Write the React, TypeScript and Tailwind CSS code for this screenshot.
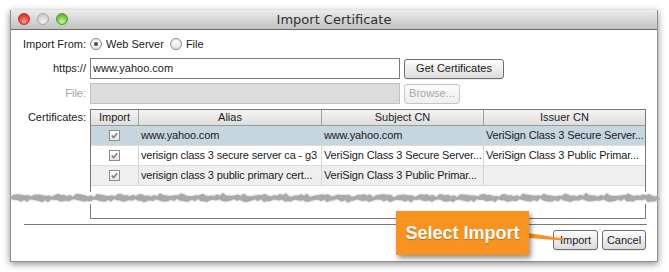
import React from "react";

const font = { fontFamily: '"Liberation Sans", Arial, sans-serif' };

function Radio({ checked }: { checked: boolean }) {
  return (
    <span className="flex h-[12px] w-[12px] items-center justify-center rounded-full border border-[#8a8a8a] bg-[linear-gradient(#ffffff,#e2e2e2)] shadow-[inset_0_1px_1px_rgba(0,0,0,0.12)]">
      {checked && <span className="h-[4px] w-[4px] rounded-full bg-[#4a4a4a]" />}
    </span>
  );
}

function Check() {
  return (
    <span className="flex h-[11px] w-[11px] items-center justify-center border border-[#8c8c8c] bg-[linear-gradient(#ffffff,#e6e6e6)]">
      <svg width="9" height="9" viewBox="0 0 9 9">
        <path d="M1.8 4.6 L3.6 6.6 L7.2 2.2" fill="none" stroke="#7a7a7a" strokeWidth="1.5" />
      </svg>
    </span>
  );
}

function Button({ children, disabled, className }: { children: React.ReactNode; disabled?: boolean; className?: string }) {
  return (
    <div
      className={
        "flex h-[20px] items-center justify-center rounded-[3px] border text-[11px] leading-none " +
        (disabled
          ? "border-[#c4c4c4] bg-[linear-gradient(#fbfbfb,#efefef)] text-[#a6a6a6] "
          : "border-[#6f6f6f] bg-[linear-gradient(#fdfdfd,#dcdcdc)] text-[#1a1a1a] shadow-[0_1px_0_rgba(0,0,0,0.08)] ") +
        (className ?? "")
      }
    >
      {children}
    </div>
  );
}

function Tear() {
  const w = 650;
  const top: string[] = [];
  const bot: string[] = [];
  const noise = (x: number, s: number) =>
    Math.sin(x * 0.9 + s) * 0.7 + Math.sin(x * 0.31 + s * 2) * 0.8 + Math.sin(x * 2.7 + s) * 0.45 + ((((x * 7919 + s * 131) % 17) + 17) % 17) / 17 - 0.5;
  for (let x = 0; x <= w; x += 3) {
    top.push(`${x},${(4.2 + noise(x, 1) * 1.1).toFixed(2)}`);
  }
  for (let x = w; x >= 0; x -= 3) {
    bot.push(`${x},${(9.6 + noise(x, 5) * 1.1).toFixed(2)}`);
  }
  const pts = [...top, ...bot].join(" ");
  return (
    <svg width={w} height="14" viewBox={`0 0 ${w} 14`} className="block">
      <defs>
        <filter id="tb" x="-5%" y="-50%" width="110%" height="200%">
          <feGaussianBlur stdDeviation="1.1" />
        </filter>
        <filter id="tb2" x="-5%" y="-50%" width="110%" height="200%">
          <feGaussianBlur stdDeviation="0.45" />
        </filter>
      </defs>
      <polygon points={pts} fill="#bdbdbd" filter="url(#tb)" />
      <polygon points={pts} fill="#a9a9a9" filter="url(#tb2)" transform="translate(0,0.3) scale(1,0.97)" />
    </svg>
  );
}

const rows = [
  { alias: "www.yahoo.com", subject: "www.yahoo.com", issuer: "VeriSign Class 3 Secure Server...", bg: "bg-[#c5d6df]" },
  { alias: "verisign class 3 secure server ca - g3", subject: "VeriSign Class 3 Secure Server...", issuer: "VeriSign Class 3 Public Primar...", bg: "bg-white" },
  { alias: "verisign class 3 public primary cert...", subject: "VeriSign Class 3 Public Primar...", issuer: "", bg: "bg-[#efefef]" },
];

export default function App() {
  return (
    <div className="relative h-[272px] w-[669px] overflow-hidden bg-white pl-[10px] pt-[10px]" style={font}>
      <div className="flex h-[252px] w-[648px] flex-col border-x border-b border-[#8e8e8e] bg-white shadow-[0_2px_7px_rgba(0,0,0,0.45)]">
        {/* title bar */}
        <div className="relative flex h-[20px] shrink-0 items-center justify-center border-b border-[#6c6c6c] bg-[linear-gradient(#ececec,#d2d2d2_60%,#c3c3c3)]">
          <div className="absolute left-[7px] top-[3px] flex gap-[7px]">
            <span className="h-[12px] w-[12px] rounded-full border border-[#b5302a] bg-[radial-gradient(circle_at_50%_75%,#ff9a8c,#e8473c_55%,#c52a22)]" />
            <span className="h-[12px] w-[12px] rounded-full border border-[#a8a8a8] bg-[radial-gradient(circle_at_50%_75%,#f4f4f4,#d6d6d6_55%,#bdbdbd)]" />
            <span className="h-[12px] w-[12px] rounded-full border border-[#4f9a2e] bg-[radial-gradient(circle_at_50%_75%,#c6f5a4,#72cc45_55%,#4ea428)]" />
          </div>
          <span className="text-[13px] leading-none text-[#2e2e2e]" style={{ fontFamily: '"DejaVu Sans", sans-serif' }}>
            Import Certificate
          </span>
        </div>

        {/* top content */}
        <div className="flex h-[162px] shrink-0 flex-col pr-[11px] pt-[6px] text-[11px] leading-none text-[#1a1a1a]">
          <div className="grid grid-cols-[75px_1fr] gap-x-[4px]">
            <div className="flex h-[16px] items-center justify-end">Import From:</div>
            <div className="flex h-[16px] items-center">
              <Radio checked />
              <span className="ml-[4px]">Web Server</span>
              <span className="ml-[6px]">
                <Radio checked={false} />
              </span>
              <span className="ml-[4px]">File</span>
            </div>
          </div>

          <div className="mt-[6px] grid grid-cols-[75px_1fr] gap-x-[4px]">
            <div className="flex h-[21px] items-center justify-end">https://</div>
            <div className="flex h-[21px] items-center gap-[4px]">
              <div className="flex h-[21px] w-[310px] items-center border border-[#7c7c7c] bg-white pl-[2px]">www.yahoo.com</div>
              <Button className="w-[100px]">Get Certificates</Button>
            </div>
          </div>

          <div className="mt-[4px] grid grid-cols-[75px_1fr] gap-x-[4px]">
            <div className="flex h-[21px] items-center justify-end text-[#a4a4a4]">File:</div>
            <div className="flex h-[21px] items-center gap-[4px]">
              <div className="h-[21px] w-[310px] border border-[#c2c2c2] bg-[#dcdcdc]" />
              <Button disabled className="w-[56px]">
                Browse...
              </Button>
            </div>
          </div>

          <div className="mt-[5px] grid grid-cols-[75px_1fr] gap-x-[4px]">
            <div className="flex h-[17px] items-center justify-end">Certificates:</div>
            <div className="h-[83px] border-x border-t border-[#7a7a7a]">
              <div className="grid h-[16px] grid-cols-[48px_183px_162px_1fr] border-b border-[#9a9a9a] bg-[linear-gradient(#f4f4f4,#dedede)] text-[#222]">
                <div className="flex items-center justify-center border-r border-[#a2a2a2]">Import</div>
                <div className="flex items-center justify-center border-r border-[#a2a2a2]">Alias</div>
                <div className="flex items-center justify-center border-r border-[#a2a2a2]">Subject CN</div>
                <div className="flex items-center justify-center">Issuer CN</div>
              </div>
              {rows.map((r, i) => (
                <div key={i} className={"grid h-[20px] grid-cols-[48px_183px_162px_1fr] border-b border-[#dcdcdc] tracking-[-0.15px] " + r.bg}>
                  <div className="flex items-center justify-center border-r border-[#d4d4d4]">
                    <Check />
                  </div>
                  <div className="flex items-center overflow-hidden whitespace-nowrap border-r border-[#d4d4d4] pl-[2px]">{r.alias}</div>
                  <div className="flex items-center overflow-hidden whitespace-nowrap border-r border-[#d4d4d4] pl-[2px]">{r.subject}</div>
                  <div className="flex items-center overflow-hidden whitespace-nowrap pl-[2px]">{r.issuer}</div>
                </div>
              ))}
            </div>
          </div>
        </div>

        {/* tear */}
        <div className="-mx-[1px] h-[12px] shrink-0 overflow-visible">
          <div className="-mt-[1px]">
            <Tear />
          </div>
        </div>

        {/* bottom content */}
        <div className="flex flex-1 flex-col pr-[11px] text-[11px] leading-none text-[#1a1a1a]">
          <div className="ml-[79px] h-[15px] border-x border-b border-[#7a7a7a]" />
          <div className="ml-[13px] mr-[-1px] mt-[5px] h-px bg-[#7a7a7a]" />
          <div className="mt-[5px] flex justify-end gap-[4px]">
            <Button className="w-[45px]">Import</Button>
            <Button className="w-[44px]">Cancel</Button>
          </div>
        </div>
      </div>

      {/* callout annotation */}
      <svg className="absolute left-[520px] top-[228px]" width="50" height="16" viewBox="0 0 50 16">
        <polygon points="8,5 8,10 43,12.5 43,10.5" fill="#f7931e" />
      </svg>
      <div className="absolute left-[396px] top-[211px] flex h-[44px] w-[133px] items-center justify-center bg-[#f7931e] shadow-[2px_3px_5px_rgba(0,0,0,0.45)]">
        <span className="text-[18px] font-bold leading-none text-white [text-shadow:0_1px_1px_rgba(0,0,0,0.25)]" style={font}>
          Select Import
        </span>
      </div>
    </div>
  );
}
